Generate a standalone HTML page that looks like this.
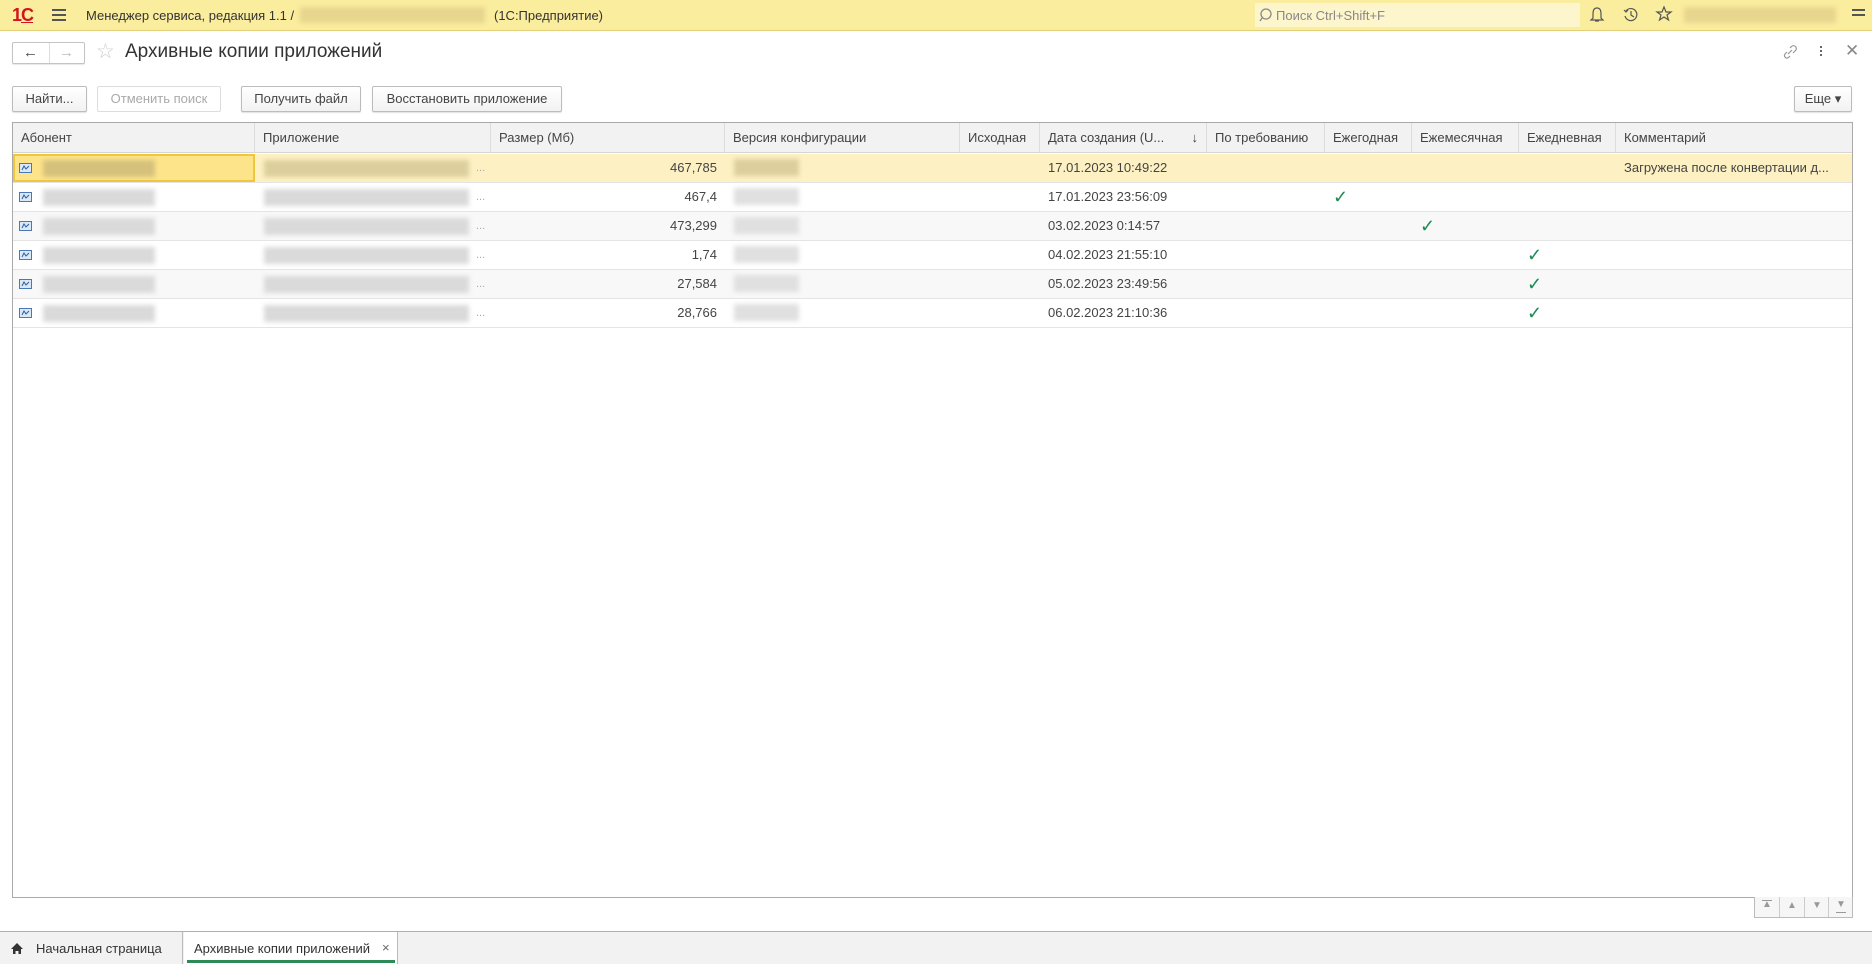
<!DOCTYPE html>
<html><head><meta charset="utf-8">
<style>
*{box-sizing:border-box;margin:0;padding:0}
body{width:1872px;height:964px;background:#fff;font-family:"Liberation Sans",Arial,sans-serif;font-size:13px;color:#333;position:relative;overflow:hidden}
.abs{position:absolute}
.top{left:0;top:0;width:1872px;height:31px;background:#fbed9e;border-bottom:1px solid #e2cf7a}
.btn{position:absolute;height:26px;border:1px solid #bcbcbc;border-radius:2px;background:linear-gradient(#fff,#f2f2f2);box-shadow:0 1px 1px rgba(0,0,0,.12);font-size:13px;line-height:24px;text-align:center;color:#444}
.tbl{left:12px;top:122px;width:1841px;height:776px;border:1px solid #a9a9a9}
.hdr{position:absolute;left:0;top:0;width:100%;height:30px;background:#f2f2f2;border-bottom:1px solid #d5d5d5}
.hc{position:absolute;top:0;height:30px;line-height:30px;padding-left:8px;border-right:1px solid #dcdcdc;color:#444;white-space:nowrap;overflow:hidden}
.row{position:absolute;left:0;width:100%;height:29px;border-bottom:1px solid #e4e4e4}
.c{position:absolute;top:0;height:28px;line-height:28px;white-space:nowrap;color:#444}
.blur{position:absolute;background:#d9d9d9;filter:blur(2.5px)}
.b1{position:absolute;left:30px;top:6px;width:112px;height:17px;background:#dadada;filter:blur(2.5px)}
.b2{position:absolute;left:251px;top:6px;width:205px;height:17px;background:#dadada;filter:blur(2.5px)}
.b3{position:absolute;left:721px;top:5px;width:65px;height:17px;background:#e0e0e0;filter:blur(2.5px)}
.dots{position:absolute;left:463px;top:4px;color:#aaa;font-size:11px;line-height:20px}
.chk{position:absolute;color:#1d8a55;font-size:18px;line-height:28px}
</style></head><body>
<div class="abs top">
 <div class="abs" style="left:12px;top:5px;color:#d2141e;font-weight:bold;font-size:18px;letter-spacing:-1px">1<span style="text-decoration:underline">С</span></div>
 <div class="abs" style="left:52px;top:9px;width:14px;height:2px;background:#555;box-shadow:0 5px 0 #555,0 10px 0 #555"></div>
 <div class="abs" style="left:86px;top:8px;font-size:13px;color:#333">Менеджер сервиса, редакция 1.1 /</div>
 <div class="blur" style="left:300px;top:7px;width:185px;height:16px;background:#e6d68e"></div>
 <div class="abs" style="left:494px;top:8px;font-size:13px;color:#333">(1С:Предприятие)</div>
 <div class="abs" style="left:1255px;top:3px;width:325px;height:24px;background:#fdf5cc"></div>
 <svg class="abs" style="left:1259px;top:7px" width="16" height="16"><circle cx="7" cy="7" r="5" fill="none" stroke="#888" stroke-width="1.3"/><line x1="3" y1="11" x2="1" y2="14" stroke="#888" stroke-width="1.3"/></svg>
 <div class="abs" style="left:1276px;top:8px;color:#888">Поиск Ctrl+Shift+F</div>
 <svg class="abs" style="left:1588px;top:6px" width="18" height="18"><path d="M9 2 C5 2 5 6 5 9 L5 12 L3 14 H15 L13 12 V9 C13 6 13 2 9 2Z M7 15 H11" fill="none" stroke="#555" stroke-width="1.2"/></svg>
 <svg class="abs" style="left:1622px;top:6px" width="18" height="18"><path d="M4 5 A6 6 0 1 1 3 10 M2 4 L4 6 L6 4 M9 5 V9 L12 11" fill="none" stroke="#555" stroke-width="1.2"/></svg>
 <svg class="abs" style="left:1655px;top:5px" width="18" height="18"><path d="M9 2 L11 7 L16 7 L12 10 L13.5 15 L9 12 L4.5 15 L6 10 L2 7 L7 7Z" fill="none" stroke="#555" stroke-width="1.2"/></svg>
 <div class="blur" style="left:1684px;top:7px;width:152px;height:16px;background:#e6d68e"></div>
 <div class="abs" style="left:1852px;top:9px;width:13px;height:1.5px;background:#555;box-shadow:0 5px 0 #555"></div>
</div>
<div class="abs" style="left:12px;top:42px;width:73px;height:22px;border:1px solid #c4c4c4;border-radius:2px;background:#fff;box-shadow:0 1px 1px rgba(0,0,0,.1)">
 <div class="abs" style="left:36px;top:0;width:1px;height:20px;background:#ddd"></div>
 <div class="abs" style="left:10px;top:0;font-size:15px;line-height:20px;color:#444">&#8592;</div>
 <div class="abs" style="left:46px;top:0;font-size:15px;line-height:20px;color:#bbb">&#8594;</div>
</div>
<div class="abs" style="left:96px;top:39px;font-size:21px;color:#ccc">☆</div>
<div class="abs" style="left:125px;top:41px;font-size:19px;color:#333">Архивные копии приложений</div>
<svg class="abs" style="left:1782px;top:44px" width="16" height="16"><path d="M6 10 L10 6 M5 8 L3 10 A2.5 2.5 0 0 0 6.5 13.5 L8 12 M8 4 L9.5 2.5 A2.5 2.5 0 0 1 13.5 6.5 L11 9" fill="none" stroke="#999" stroke-width="1.2"/></svg>
<div class="abs" style="left:1820px;top:46px;width:2px;height:2px;background:#666;box-shadow:0 4px 0 #666,0 8px 0 #666"></div>
<div class="abs" style="left:1845px;top:41px;font-size:17px;color:#888">✕</div>
<div class="btn" style="left:12px;top:86px;width:75px">Найти...</div>
<div class="btn" style="left:97px;top:86px;width:124px;color:#aaa;background:#fff;box-shadow:none;border-color:#ddd">Отменить поиск</div>
<div class="btn" style="left:241px;top:86px;width:120px">Получить файл</div>
<div class="btn" style="left:372px;top:86px;width:190px">Восстановить приложение</div>
<div class="btn" style="left:1794px;top:86px;width:58px">Еще ▾</div>
<div class="abs tbl">
 <div class="hdr">
  <div class="hc" style="left:0;width:242px">Абонент</div>
  <div class="hc" style="left:242px;width:236px">Приложение</div>
  <div class="hc" style="left:478px;width:234px">Размер (Мб)</div>
  <div class="hc" style="left:712px;width:235px">Версия конфигурации</div>
  <div class="hc" style="left:947px;width:80px">Исходная</div>
  <div class="hc" style="left:1027px;width:167px">Дата создания (U...<span style="position:absolute;right:8px">↓</span></div>
  <div class="hc" style="left:1194px;width:118px">По требованию</div>
  <div class="hc" style="left:1312px;width:87px">Ежегодная</div>
  <div class="hc" style="left:1399px;width:107px">Ежемесячная</div>
  <div class="hc" style="left:1506px;width:97px">Ежедневная</div>
  <div class="hc" style="left:1603px;width:237px;border-right:none">Комментарий</div>
 </div>
 <div class="row" style="top:31px;background:#fdf1c3">
  <div class="abs" style="left:0;top:0;width:242px;height:28px;background:#fde48a;border:2px solid #f0c63c"></div>
  <div class="b1" style="background:#d6c17c;width:112px"></div><div class="b2" style="background:#dccf9c"></div><div class="b3" style="background:#dccf9c"></div><div class="dots">...</div>
  <div class="c" style="left:1027px;padding-left:8px">17.01.2023 10:49:22</div>
  <div class="c" style="left:1603px;padding-left:8px">Загружена после конвертации д...</div>
  <div class="c" style="left:478px;width:226px;text-align:right">467,785</div>
 </div>
 <div class="row" style="top:60px;background:#fff"><div class="b1"></div><div class="b2"></div><div class="b3"></div><div class="dots">...</div><div class="c" style="left:1027px;padding-left:8px">17.01.2023 23:56:09</div><div class="c" style="left:478px;width:226px;text-align:right">467,4</div><div class="chk" style="left:1320px">✓</div></div>
 <div class="row" style="top:89px;background:#f8f8f8"><div class="b1"></div><div class="b2"></div><div class="b3"></div><div class="dots">...</div><div class="c" style="left:1027px;padding-left:8px">03.02.2023 0:14:57</div><div class="c" style="left:478px;width:226px;text-align:right">473,299</div><div class="chk" style="left:1407px">✓</div></div>
 <div class="row" style="top:118px;background:#fff"><div class="b1"></div><div class="b2"></div><div class="b3"></div><div class="dots">...</div><div class="c" style="left:1027px;padding-left:8px">04.02.2023 21:55:10</div><div class="c" style="left:478px;width:226px;text-align:right">1,74</div><div class="chk" style="left:1514px">✓</div></div>
 <div class="row" style="top:147px;background:#f8f8f8"><div class="b1"></div><div class="b2"></div><div class="b3"></div><div class="dots">...</div><div class="c" style="left:1027px;padding-left:8px">05.02.2023 23:49:56</div><div class="c" style="left:478px;width:226px;text-align:right">27,584</div><div class="chk" style="left:1514px">✓</div></div>
 <div class="row" style="top:176px;background:#fff"><div class="b1"></div><div class="b2"></div><div class="b3"></div><div class="dots">...</div><div class="c" style="left:1027px;padding-left:8px">06.02.2023 21:10:36</div><div class="c" style="left:478px;width:226px;text-align:right">28,766</div><div class="chk" style="left:1514px">✓</div></div>
 <svg class="abs" style="left:6px;top:40px" width="14" height="180">
  <g fill="#dbe8f6" stroke="#4a78b5" stroke-width="1">
   <rect x="0.5" y="0.5" width="12" height="9"/><rect x="0.5" y="29.5" width="12" height="9"/><rect x="0.5" y="58.5" width="12" height="9"/><rect x="0.5" y="87.5" width="12" height="9"/><rect x="0.5" y="116.5" width="12" height="9"/><rect x="0.5" y="145.5" width="12" height="9"/>
  </g>
  <g fill="none" stroke="#2a5da0" stroke-width="1">
   <path d="M3 7 L5 3 L7 6 L10 3"/><path d="M3 36 L5 32 L7 35 L10 32"/><path d="M3 65 L5 61 L7 64 L10 61"/><path d="M3 94 L5 90 L7 93 L10 90"/><path d="M3 123 L5 119 L7 122 L10 119"/><path d="M3 152 L5 148 L7 151 L10 148"/>
  </g>
 </svg>
</div>
<div class="abs" style="left:1754px;top:897px;width:99px;height:21px;border:1px solid #bbb;border-top:none;background:#f6f6f6">
 <div class="abs" style="left:24px;top:0;width:1px;height:20px;background:#ccc;box-shadow:25px 0 0 #ccc,49px 0 0 #ccc"></div>
 <div class="abs" style="left:7px;top:2px;font-size:10px;color:#999">▲</div>
 <div class="abs" style="left:7px;top:3px;width:10px;height:1px;background:#999"></div>
 <div class="abs" style="left:32px;top:3px;font-size:10px;color:#999">▲</div>
 <div class="abs" style="left:57px;top:3px;font-size:10px;color:#999">▼</div>
 <div class="abs" style="left:81px;top:2px;font-size:10px;color:#999">▼</div>
 <div class="abs" style="left:81px;top:15px;width:10px;height:1px;background:#999"></div>
</div>
<div class="abs" style="left:0;top:931px;width:1872px;height:33px;background:#f2f2f2;border-top:1px solid #b0b0b0"></div>
<div class="abs" style="left:0;top:932px;width:183px;height:32px;border-right:1px solid #bbb"></div>
<svg class="abs" style="left:10px;top:942px" width="14" height="13"><path d="M7 1 L13 7 H11 V12 H8.5 V9 H5.5 V12 H3 V7 H1Z" fill="#333"/></svg>
<div class="abs" style="left:36px;top:941px;font-size:13px;color:#333">Начальная страница</div>
<div class="abs" style="left:184px;top:932px;width:214px;height:32px;background:#fff;border-right:1px solid #bbb"></div>
<div class="abs" style="left:194px;top:941px;font-size:13px;color:#333">Архивные копии приложений</div>
<div class="abs" style="left:382px;top:940px;font-size:13px;color:#666">×</div>
<div class="abs" style="left:187px;top:960px;width:208px;height:3px;background:#2e8b57"></div>
</body></html>
